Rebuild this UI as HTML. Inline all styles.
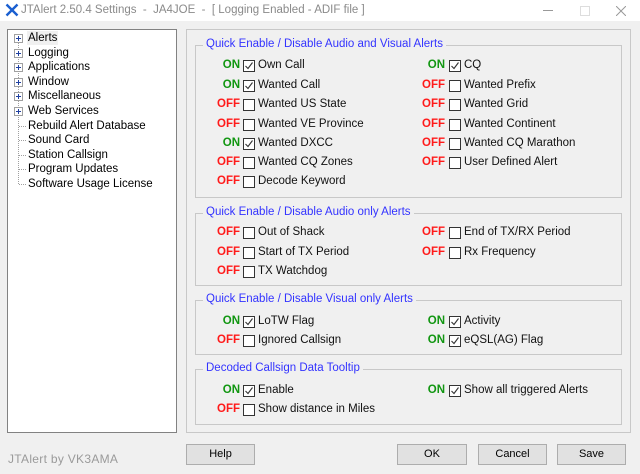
<!DOCTYPE html>
<html><head><meta charset="utf-8"><style>
*{margin:0;padding:0;box-sizing:border-box}
body{width:640px;height:474px;background:#f0f0f0;font-family:"Liberation Sans",sans-serif;font-size:11px;color:#000;position:relative;overflow:hidden}
.a{position:absolute;white-space:nowrap}
#title{left:0;top:0;width:640px;height:21px;background:#fff}
.tree{left:7px;top:29px;width:170px;height:404px;background:#fff;border:1px solid #828282}
.ti{position:absolute;left:20px;font-size:11.5px;line-height:14px}
.pb{position:absolute;left:6px;width:9px;height:9px}
.dot{position:absolute;left:10px;border-left:1px dotted #a0a0a0}
.outer{left:186px;top:29px;width:445px;height:404px;border:1px solid #c8c8c8}
.grp{position:absolute;border:1px solid #c8c8c8}
.gt{position:absolute;color:#3333ff;background:#f0f0f0;padding:0 3px;font-size:11.5px;line-height:13px}
.l{position:absolute;width:40px;text-align:right;font-weight:bold;font-size:11.5px;line-height:14px}
.on{color:#119611}.off{color:#ff1a1a}
.cb{position:absolute;width:12px;height:12px;border:1px solid #333;background:#fff}
.tx{position:absolute;font-size:11.5px;line-height:14px;color:#111}
.btn{position:absolute;top:444px;height:21px;border:1px solid #adadad;background:#e1e1e1;text-align:center;line-height:19px;font-size:11px}
</style></head><body>
<div class="a" id="title">
<svg style="position:absolute;left:5px;top:3px" width="14" height="14" viewBox="0 0 14 14"><path d="M1.5 1.5 L12.5 12.5 M12.5 1.5 L1.5 12.5" stroke="#1a5fd0" stroke-width="2.4"/></svg>
<span class="a" style="left:21px;top:4px;color:#8a8a8a;font-size:11.5px">JTAlert 2.50.4 Settings &nbsp;- &nbsp;JA4JOE &nbsp;- &nbsp;[ Logging Enabled - ADIF file ]</span>
<svg style="position:absolute;left:543px;top:10px" width="10" height="2"><rect width="10" height="1" fill="#999"/></svg>
<svg style="position:absolute;left:580px;top:6px" width="10" height="10"><rect x=".5" y=".5" width="9" height="9" fill="none" stroke="#ddd"/></svg>
<svg style="position:absolute;left:616px;top:6px" width="10" height="10"><path d="M0 0L10 10M10 0L0 10" stroke="#999"/></svg>
</div>
<div class="a tree">
<div class="dot" style="top:8px;height:146px"></div>
<div id="tr"></div>
</div>
<div class="a outer"></div>
<div class="a" style="left:8px;top:452px;color:#9a9a9a;font-size:12px;letter-spacing:.3px">JTAlert by VK3AMA</div>
<div class="btn" style="left:186px;width:69px">Help</div>
<div class="btn" style="left:397px;width:70px">OK</div>
<div class="btn" style="left:478px;width:69px">Cancel</div>
<div class="btn" style="left:557px;width:69px">Save</div>
<div id="c"></div>
<script>
var tr=document.getElementById('tr'),h='';
var items=['Alerts','Logging','Applications','Window','Miscellaneous','Web Services','Rebuild Alert Database','Sound Card','Station Callsign','Program Updates','Software Usage License'];
items.forEach(function(t,i){var y=1+i*14.6;
 if(i<6)h+='<svg class="pb" style="top:'+(y+3)+'px" viewBox="0 0 9 9"><rect x=".5" y=".5" width="8" height="8" fill="#fff" stroke="#a0a0a0"/><path d="M2 4.5H7M4.5 2V7" stroke="#2040a0"/></svg>';
 else h+='<div style="position:absolute;left:11px;top:'+(y+7)+'px;width:7px;border-top:1px dotted #a0a0a0"></div>';
 h+='<div class="ti" style="top:'+y+'px'+(i==0?';background:#f0f0f0;padding:0 1px;left:19px':'')+'">'+t+'</div>';});
tr.innerHTML=h;
var c='';
function g(x,y,w,hh,t){c+='<div class="grp" style="left:'+x+'px;top:'+y+'px;width:'+w+'px;height:'+hh+'px"></div><div class="gt" style="left:'+(x+8)+'px;top:'+(y-7)+'px">'+t+'</div>';}
g(195,45,427,153,'Quick Enable / Disable Audio and Visual Alerts');
g(195,213,427,73,'Quick Enable / Disable Audio only Alerts');
g(195,300,427,55,'Quick Enable / Disable Visual only Alerts');
g(195,369,427,56,'Decoded Callsign Data Tooltip');
var chk='<svg width="10" height="10" style="position:absolute;left:0;top:0"><path d="M1.5 5L4 7.5L8.5 1.5" fill="none" stroke="#333" stroke-width="1.1"/></svg>';
function r(col,y,on,t){var lx=col?405:200,cx=col?449:243,tx=col?464:258,top=y-7;
 c+='<div class="l '+(on?'on':'off')+'" style="left:'+lx+'px;top:'+top+'px">'+(on?'ON':'OFF')+'</div>';
 c+='<div class="cb" style="left:'+cx+'px;top:'+(y-5)+'px">'+(on?chk:'')+'</div>';
 c+='<div class="tx" style="left:'+tx+'px;top:'+top+'px">'+t+'</div>';}
var Y=[65,85,104,124,143,162,181];
r(0,Y[0],1,'Own Call');r(1,Y[0],1,'CQ');
r(0,Y[1],1,'Wanted Call');r(1,Y[1],0,'Wanted Prefix');
r(0,Y[2],0,'Wanted US State');r(1,Y[2],0,'Wanted Grid');
r(0,Y[3],0,'Wanted VE Province');r(1,Y[3],0,'Wanted Continent');
r(0,Y[4],1,'Wanted DXCC');r(1,Y[4],0,'Wanted CQ Marathon');
r(0,Y[5],0,'Wanted CQ Zones');r(1,Y[5],0,'User Defined Alert');
r(0,Y[6],0,'Decode Keyword');
r(0,232,0,'Out of Shack');r(1,232,0,'End of TX/RX Period');
r(0,252,0,'Start of TX Period');r(1,252,0,'Rx Frequency');
r(0,271,0,'TX Watchdog');
r(0,321,1,'LoTW Flag');r(1,321,1,'Activity');
r(0,340,0,'Ignored Callsign');r(1,340,1,'eQSL(AG) Flag');
r(0,390,1,'Enable');r(1,390,1,'Show all triggered Alerts');
r(0,409,0,'Show distance in Miles');
document.getElementById('c').innerHTML=c;
</script>
</body></html>
